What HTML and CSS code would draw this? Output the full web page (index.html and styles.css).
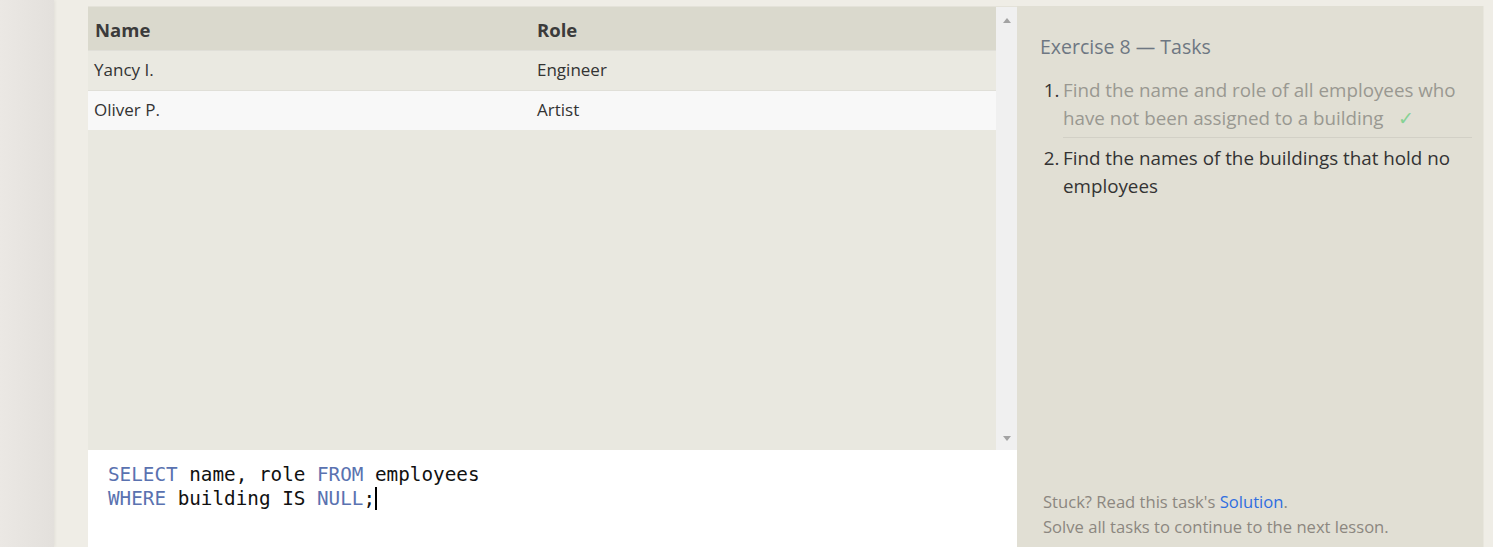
FILE: index.html
```html
<!DOCTYPE html>
<html>
<head>
<meta charset="utf-8">
<link rel="stylesheet" href="styles.css">
</head>
<body>
<div class="page">
  <div class="side"></div>
  <div class="main">
    <div class="work">
      <div class="results">
        <div class="table-pane">
          <table class="grid">
            <thead>
              <tr><th class="c1">Name</th><th>Role</th></tr>
            </thead>
            <tbody>
              <tr class="odd"><td>Yancy I.</td><td>Engineer</td></tr>
              <tr class="even"><td>Oliver P.</td><td>Artist</td></tr>
            </tbody>
          </table>
        </div>
        <div class="scrollbar">
          <span class="arrow up"></span>
          <span class="arrow down"></span>
        </div>
      </div>
      <div class="editor">
        <div class="code"><span class="kw">SELECT</span> name, role <span class="kw">FROM</span> employees</div>
        <div class="code"><span class="kw">WHERE</span> building IS <span class="kw">NULL</span>;<span class="caret"></span></div>
      </div>
    </div>
    <div class="tasks">
      <div class="title">Exercise 8 — Tasks</div>
      <ol class="list">
        <li class="done"><span class="num">1.</span><span class="txt">Find the name and role of all employees who have not been assigned to a building<span class="check">✓</span></span></li>
        <li><span class="num">2.</span><span class="txt">Find the names of the buildings that hold no employees</span></li>
      </ol>
      <div class="foot">
        <div>Stuck? Read this task's <span class="link">Solution</span>.</div>
        <div>Solve all tasks to continue to the next lesson.</div>
      </div>
    </div>
  </div>
</div>
</body>
</html>
```
FILE: styles.css
```css
html, body {
  margin: 0;
  padding: 0;
  height: 100%;
  overflow: hidden;
}
body {
  background: #efede6;
  font-family: "Open Sans", "Noto Sans", sans-serif;
}
.page {
  display: flex;
  height: 547px;
}
.side {
  width: 54px;
  flex: none;
  background: linear-gradient(to right, #ebe8e4, #e3e0dc);
  box-shadow: 1px 0 3px rgba(0,0,0,0.06);
}
.main {
  flex: 1;
  display: flex;
  padding: 6px 9px 0 34px;
}
.work {
  width: 929px;
  flex: none;
  display: flex;
  flex-direction: column;
  border-top: 1px solid #e4e2d9;
}
.results {
  height: 443px;
  display: flex;
  flex: none;
}
.table-pane {
  width: 908px;
  background: #e9e8e0;
}
.grid {
  width: 100%;
  border-collapse: collapse;
}
.grid th {
  text-align: left;
  font-weight: 700;
  font-size: 18.5px;
  color: #3b3b3b;
  background: #dad9cd;
  height: 43px;
  padding: 2px 6px 0 7px;
  box-sizing: border-box;
}
.grid th.c1 {
  width: 442px;
}
.grid td {
  font-size: 17px;
  color: #333;
  height: 40px;
  padding: 0 6px 2px 6px;
  box-sizing: border-box;
  border-top: 1px solid #e0dfd8;
}
.grid td + td {
  padding-left: 7px;
}
.grid tr.odd td { background: #eae9e1; }
.grid tr.even td { background: #f8f8f8; }
.scrollbar {
  width: 21px;
  background: #f0f0f0;
  display: flex;
  flex-direction: column;
  justify-content: space-between;
  align-items: center;
  padding: 11px 0 9px;
  box-sizing: border-box;
}
.arrow {
  width: 0;
  height: 0;
  border-left: 4px solid transparent;
  border-right: 4px solid transparent;
}
.arrow.up { border-bottom: 5px solid #a3a3a3; }
.arrow.down { border-top: 5px solid #a3a3a3; }
.editor {
  flex: 1;
  background: #fff;
  padding: 13px 20px 0;
  font-family: "DejaVu Sans Mono", monospace;
  font-size: 19.3px;
  line-height: 24px;
  color: #111;
}
.code { white-space: pre; }
.kw { color: #5a72b0; }
.caret {
  display: inline-block;
  width: 2px;
  height: 23px;
  background: #000;
  vertical-align: -5px;
}
.tasks {
  flex: 1;
  background: #e1dfd4;
  border-right: 1px solid #e8e6dd;
  display: flex;
  flex-direction: column;
  padding: 25px 11px 8px 23px;
  box-sizing: border-box;
}
.title {
  font-size: 19.5px;
  color: #6e7782;
  line-height: 32px;
}
.list {
  list-style: none;
  margin: 13px 0 0;
  padding: 0;
}
.list li {
  display: flex;
  font-size: 18.8px;
  line-height: 28px;
  color: #333;
}
.list li .num {
  width: 23px;
  flex: none;
  text-align: center;
}
.list li .txt {
  flex: 1;
}
.list li.done .txt {
  color: #999891;
  border-bottom: 1px solid #d2d0c6;
  padding-bottom: 5px;
  margin-bottom: 6px;
}
.check {
  display: inline-block;
  color: #86d294;
  margin-left: 15px;
  font-size: 19px;
  line-height: 20px;
}
.foot {
  margin-top: auto;
  font-size: 16.6px;
  line-height: 25px;
  color: #8c8780;
  padding-left: 3px;
}
.link { color: #2f6ee0; }
```
